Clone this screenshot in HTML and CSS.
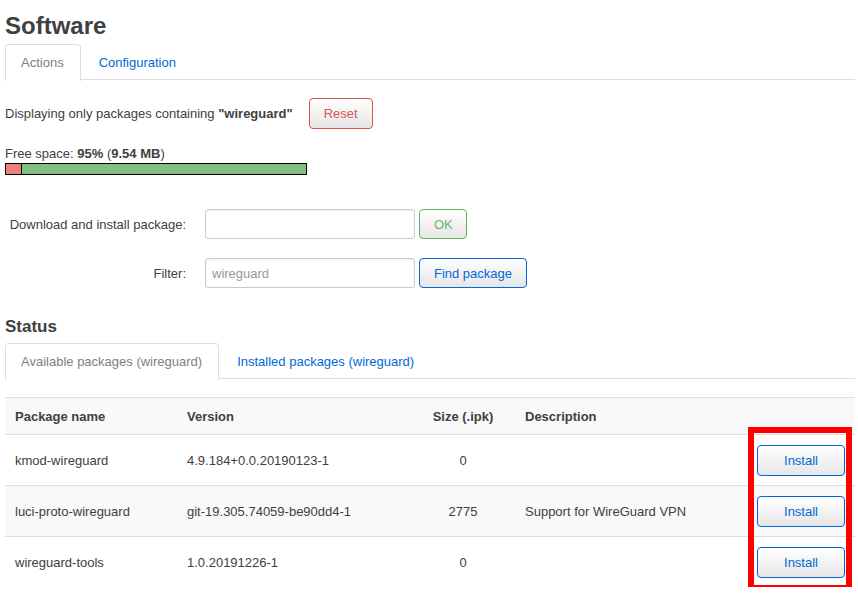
FILE: index.html
```html
<!DOCTYPE html>
<html>
<head>
<meta charset="utf-8">
<link rel="stylesheet" href="styles.css">
</head>
<body>
<div class="page">
  <h2 class="title">Software</h2>
  <ul class="tabs">
    <li class="tab active">Actions</li>
    <li class="tab">Configuration</li>
  </ul>

  <div class="filter-info">
    <span>Displaying only packages containing <b>"wireguard"</b></span>
    <button class="btn btn-reset">Reset</button>
  </div>

  <div class="free">
    <div class="free-text">Free space: <b>95%</b> (<b>9.54 MB</b>)</div>
    <div class="bar"><div class="bar-used"></div><div class="bar-free"></div></div>
  </div>

  <div class="form">
    <div class="form-row">
      <label class="form-label">Download and install package:</label>
      <input class="form-input" type="text">
      <button class="btn btn-ok">OK</button>
    </div>
    <div class="form-row">
      <label class="form-label">Filter:</label>
      <input class="form-input" type="text" placeholder="wireguard">
      <button class="btn btn-find">Find package</button>
    </div>
  </div>

  <h3 class="status">Status</h3>
  <ul class="tabs">
    <li class="tab active">Available packages (wireguard)</li>
    <li class="tab">Installed packages (wireguard)</li>
  </ul>

  <div class="table-wrap">
    <table class="pkgs">
      <colgroup>
        <col class="w-name">
        <col class="w-ver">
        <col class="w-size">
        <col class="w-desc">
        <col class="w-act">
      </colgroup>
      <thead>
        <tr>
          <th>Package name</th>
          <th>Version</th>
          <th class="size">Size (.ipk)</th>
          <th>Description</th>
          <th></th>
        </tr>
      </thead>
      <tbody>
        <tr>
          <td>kmod-wireguard</td>
          <td>4.9.184+0.0.20190123-1</td>
          <td class="size">0</td>
          <td></td>
          <td class="act"><button class="btn btn-install">Install</button></td>
        </tr>
        <tr class="odd">
          <td>luci-proto-wireguard</td>
          <td>git-19.305.74059-be90dd4-1</td>
          <td class="size">2775</td>
          <td>Support for WireGuard VPN</td>
          <td class="act"><button class="btn btn-install">Install</button></td>
        </tr>
        <tr>
          <td>wireguard-tools</td>
          <td>1.0.20191226-1</td>
          <td class="size">0</td>
          <td></td>
          <td class="act"><button class="btn btn-install">Install</button></td>
        </tr>
      </tbody>
    </table>
    <div class="highlight"></div>
  </div>
</div>
</body>
</html>
```

FILE: styles.css
```css
html, body {
  margin: 0;
  padding: 0;
  background: #fff;
}
body {
  font-family: "Liberation Sans", Arial, sans-serif;
  font-size: 13px;
  color: #404040;
}
.page {
  padding: 0 3px 0 5px;
}
.title {
  margin: 0;
  padding-top: 11px;
  font-size: 24px;
  line-height: 30px;
  font-weight: bold;
  color: #404040;
}
.tabs {
  list-style: none;
  margin: 3px 0 0 0;
  padding: 0;
  display: flex;
  border-bottom: 1px solid #ddd;
  height: 35px;
}
.tab {
  padding: 0 16px 0 15px;
  line-height: 35px;
  color: #0069d6;
  margin-right: 2px;
  border: 1px solid transparent;
  border-bottom: none;
  border-radius: 4px 4px 0 0;
}
.tab.active {
  color: #808080;
  border-color: #ddd;
  background: #fff;
  height: 36px;
  line-height: 35px;
}
.filter-info {
  display: flex;
  align-items: center;
  margin-top: 18px;
  height: 31px;
}
.btn {
  font-family: "Liberation Sans", Arial, sans-serif;
  font-size: 13px;
  background: linear-gradient(#ffffff, #e6e6e6);
  border: 1px solid #ccc;
  border-radius: 4px;
  padding: 0 14px;
  height: 31px;
  cursor: pointer;
}
.btn-reset {
  margin-left: 16px;
  width: 64px;
  border-color: #d9534f;
  color: #d9534f;
}
.free {
  margin-top: 17px;
}
.free-text {
  line-height: 16px;
}
.bar {
  display: flex;
  width: 300px;
  height: 10px;
  border: 1px solid #000;
  margin-top: 1px;
}
.bar-used {
  width: 15px;
  background: #f08080;
  border-right: 1px solid #000;
}
.bar-free {
  flex: 1;
  background: #80c080;
}
.form {
  margin-top: 34px;
  padding-left: 4px;
}
.form-row {
  display: flex;
  align-items: center;
  height: 30px;
  margin-bottom: 19px;
}
.form-label {
  width: 177px;
  text-align: right;
  padding-right: 19px;
}
.form-input {
  box-sizing: border-box;
  width: 210px;
  height: 30px;
  border: 1px solid #ccc;
  border-radius: 3px;
  padding: 0 6px;
  font-family: "Liberation Sans", Arial, sans-serif;
  font-size: 13px;
  color: #404040;
  box-shadow: inset 0 1px 2px rgba(0,0,0,0.08);
}
.form-input::placeholder {
  color: #999;
}
.form-row .btn {
  margin-left: 4px;
  height: 30px;
}
.btn-ok {
  width: 48px;
  border-color: #5cb85c;
  color: #5cb85c;
}
.btn-find {
  width: 108px;
  padding: 0;
  border-color: #0069d6;
  color: #0069d6;
}
.status {
  margin: 28px 0 0 0;
  font-size: 17px;
  line-height: 22px;
  font-weight: bold;
  color: #404040;
}
.status + .tabs {
  margin-top: 5px;
}
.table-wrap {
  position: relative;
  margin-top: 18px;
}
.pkgs {
  width: 850px;
  border-collapse: collapse;
  table-layout: fixed;
}
.w-name { width: 172px; }
.w-ver { width: 217px; }
.w-size { width: 121px; }
.w-desc { width: 232px; }
.w-act { width: 108px; }
.pkgs th, .pkgs td {
  text-align: left;
  padding: 0 10px;
  border-top: 1px solid #ddd;
  vertical-align: middle;
}
.pkgs th {
  height: 36px;
  background: #f9f9f9;
  font-weight: bold;
}
.pkgs td {
  height: 50px;
}
.pkgs tr.odd td {
  background: #f9f9f9;
}
.pkgs .size {
  text-align: center;
  padding-left: 17px;
  padding-right: 0;
}
.btn-install {
  width: 88px;
  height: 31px;
  padding: 0;
  border-color: #0069d6;
  color: #0069d6;
}
.highlight {
  position: absolute;
  left: 743px;
  top: 30px;
  width: 92px;
  height: 152px;
  border: 6px solid #ff0000;
  pointer-events: none;
}
```
